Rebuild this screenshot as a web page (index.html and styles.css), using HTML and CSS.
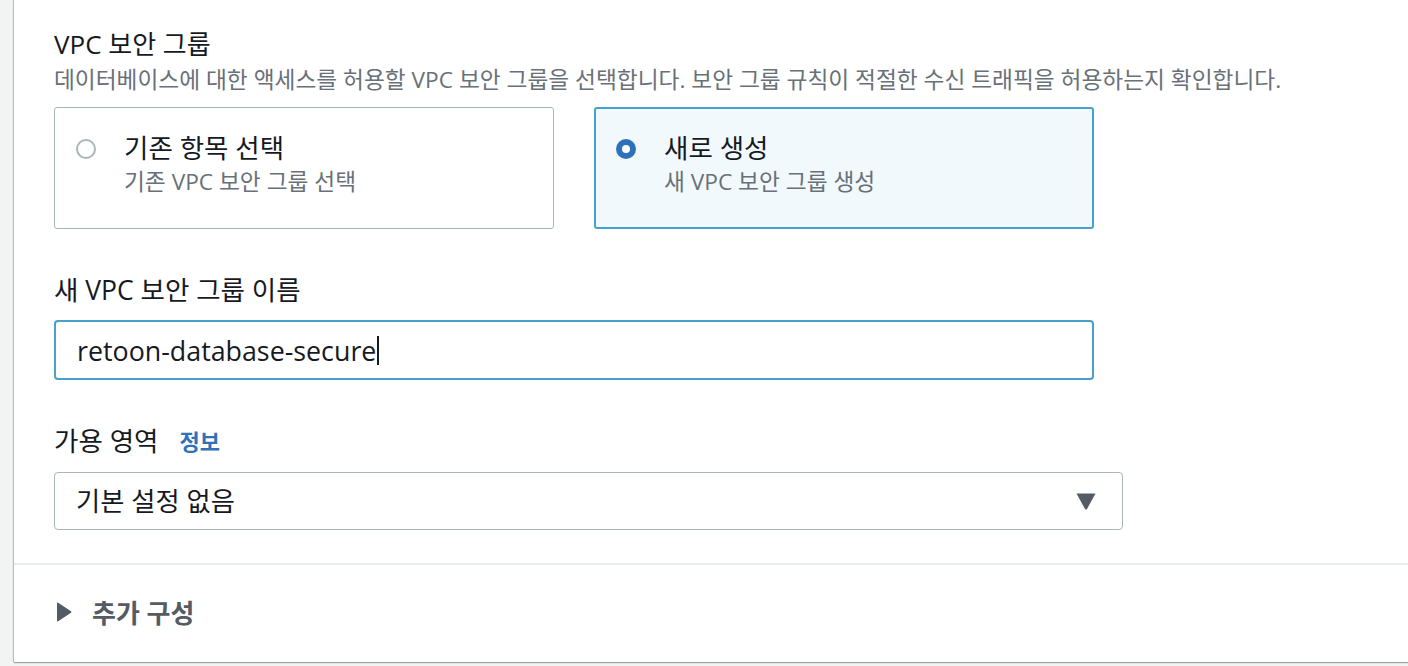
FILE: index.html
```html
<!DOCTYPE html>
<html lang="ko">
<head>
<meta charset="utf-8">
<title>VPC 보안 그룹</title>
<link rel="stylesheet" href="styles.css">
</head>
<body>
<div class="page">
  <section class="card">
    <div class="body">
      <div class="field">
        <h2 class="title">VPC 보안 그룹</h2>
        <p class="desc">데이터베이스에 대한 액세스를 허용할 VPC 보안 그룹을 선택합니다. 보안 그룹 규칙이 적절한 수신 트래픽을 허용하는지 확인합니다.</p>
        <div class="tiles">
          <div class="tile">
            <span class="radio"></span>
            <div class="tile-text">
              <div class="tile-title">기존 항목 선택</div>
              <div class="tile-sub">기존 VPC 보안 그룹 선택</div>
            </div>
          </div>
          <div class="tile selected">
            <span class="radio checked"></span>
            <div class="tile-text">
              <div class="tile-title">새로 생성</div>
              <div class="tile-sub">새 VPC 보안 그룹 생성</div>
            </div>
          </div>
        </div>
      </div>

      <div class="field field-name">
        <div class="label">새 VPC 보안 그룹 이름</div>
        <div class="input focused"><span class="value">retoon-database-secure</span><span class="caret"></span></div>
      </div>

      <div class="field field-az">
        <div class="label">가용 영역 <a class="info">정보</a></div>
        <div class="select">
          <span class="value">기본 설정 없음</span>
          <svg class="arrow" width="20" height="17" viewBox="0 0 20 17"><path d="M0.5 0.5 H19.5 L11 16 Q10 17.2 9 16 Z" fill="#545b64"/></svg>
        </div>
      </div>
    </div>
    <div class="expander">
      <svg class="expand-arrow" width="16" height="20" viewBox="0 0 16 20"><path d="M1 1.2 Q1 0 2.2 0.7 L15 9.2 Q16 10 15 10.8 L2.2 19.3 Q1 20 1 18.8 Z" fill="#545b64"/></svg>
      <span class="expander-label">추가 구성</span>
    </div>
  </section>
</div>
</body>
</html>
```

FILE: styles.css
```css
* { box-sizing: border-box; }
html, body { margin: 0; padding: 0; }
body {
  background: #f2f3f3;
  font-family: "Open Sans", "Noto Sans CJK KR", "Noto Sans", sans-serif;
  color: #16191f;
  width: 1408px;
  height: 666px;
  overflow: hidden;
}
.page {
  padding-left: 14px;
}
.card {
  background: #fff;
  height: 662px;
  box-shadow: 0 1px 1px 0 rgba(0, 28, 36, 0.35), -1px 0 1px 0 rgba(0, 28, 36, 0.2);
  display: flex;
  flex-direction: column;
}
.body {
  padding: 29px 0 0 40px;
  flex: 0 0 auto;
  height: 563px;
}
.title {
  margin: 0;
  font-size: 26px;
  line-height: 30px;
  font-weight: 400;
  color: #16191f;
}
.desc {
  margin: 7px 0 0;
  font-size: 22.7px;
  line-height: 28px;
  color: #687078;
  white-space: nowrap;
}
.tiles {
  display: flex;
  gap: 40px;
  margin-top: 13px;
}
.tile {
  width: 500px;
  height: 122px;
  border: 1px solid #aab7b8;
  border-radius: 3px;
  display: flex;
  align-items: flex-start;
  padding: 25px 0 0 21px;
  background: #fff;
}
.tile.selected {
  border: 2px solid #44a2cf;
  background: #f2f9fd;
  padding: 24px 0 0 20px;
}
.radio {
  width: 20px;
  height: 20px;
  border-radius: 50%;
  border: 2px solid #aab7b8;
  margin-top: 6px;
  flex: 0 0 auto;
  background: #fff;
}
.radio.checked {
  border: 6px solid #2d72b8;
  background: #fff;
}
.tile-text {
  margin-left: 28px;
}
.tile-title {
  font-size: 26.5px;
  line-height: 30px;
  font-weight: 400;
  color: #16191f;
}
.tile-sub {
  margin-top: 5px;
  font-size: 22.7px;
  line-height: 28px;
  color: #687078;
}
.field-name {
  margin-top: 46px;
}
.label {
  font-size: 26.5px;
  line-height: 30px;
  font-weight: 400;
  color: #16191f;
  display: flex;
  align-items: center;
}
.info {
  margin-left: 21px;
  font-size: 22px;
  font-weight: 700;
  color: #2f72b8;
  text-decoration: none;
}
.input {
  margin-top: 15px;
  width: 1040px;
  height: 60px;
  border: 2px solid #4a9fcc;
  border-radius: 4px;
  display: flex;
  align-items: center;
  padding-left: 21px;
  font-size: 26.8px;
  color: #16191f;
}
.caret {
  display: inline-block;
  width: 2px;
  height: 29px;
  background: #16191f;
  margin-left: 1px;
}
.field-az {
  margin-top: 46px;
}
.select {
  margin-top: 16px;
  width: 1069px;
  height: 58px;
  border: 1px solid #aab7b8;
  border-radius: 4px;
  display: flex;
  align-items: center;
  justify-content: space-between;
  padding: 0 26px 0 21px;
  font-size: 26.3px;
  color: #16191f;
}
.select .value { line-height: 30px; }
.arrow { display: block; }
.expander {
  border-top: 2px solid #eaeded;
  display: flex;
  align-items: center;
  padding: 0 0 0 42px;
  height: 97px;
}
.expand-arrow { display: block; margin-top: -1px; }
.expander-label {
  margin-left: 20px;
  font-size: 26px;
  font-weight: 700;
  color: #545b64;
  line-height: 30px;
}
```
